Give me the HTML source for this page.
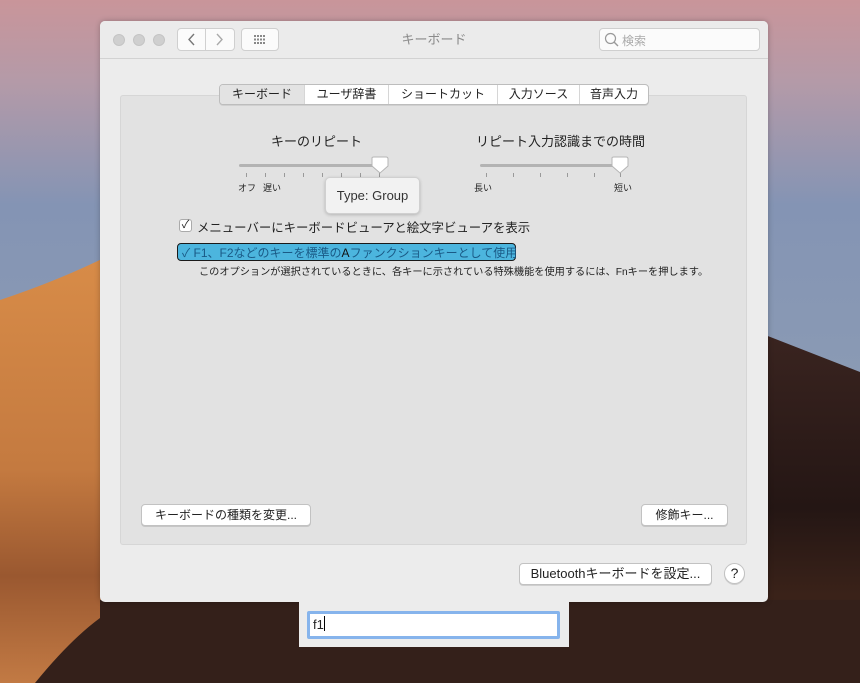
<!DOCTYPE html>
<html><head><meta charset="utf-8"><style>
*{box-sizing:border-box;margin:0;padding:0}
body{width:860px;height:683px;position:relative;overflow:hidden;font-family:"Liberation Sans","Noto Sans CJK JP",sans-serif;color:#222}
.abs{position:absolute}
.win{left:100px;top:21px;width:668px;height:581px;background:#ececec;border-radius:5px;overflow:hidden;box-shadow:0 0 6px rgba(0,0,0,.25)}
.tb{left:0;top:0;width:668px;height:38px;background:#ebebeb;border-bottom:1px solid #d2d2d2}
.dot{width:12px;height:12px;border-radius:50%;background:#cfcfcf;border:1px solid #c4c4c4;top:13px}
.btn{background:#fbfbfb;border:1px solid #cfcfcf;border-radius:4px}
.pbtn{background:#fff;border:1px solid #c2c2c2;border-radius:4px;box-shadow:0 1px 0 rgba(0,0,0,.12);font-size:12px;text-align:center;line-height:20px;height:22px}
.panel{left:20px;top:74px;width:627px;height:450px;background:#e2e2e2;border:1px solid #d6d6d6;border-radius:3px}
.tabs{left:119px;top:63px;height:21px;display:flex;border:1px solid #bdbdbd;border-radius:4px;overflow:hidden;background:#fff;font-size:12px;box-shadow:0 1px 0 rgba(0,0,0,.08)}
.tabs div{line-height:19px;text-align:center;border-left:1px solid #d6d6d6}
.tabs div:first-child{border-left:none;background:#e3e3e3}
.tick{width:1px;height:4px;background:#999;top:152px}
</style></head><body>
<svg class="abs" style="left:0;top:0" width="860" height="683">
<defs>
<linearGradient id="sky" x1="0" y1="0" x2="0" y2="1"><stop offset="0" stop-color="#c9959a"/><stop offset=".12" stop-color="#b49aa8"/><stop offset=".3" stop-color="#8494b4"/><stop offset=".55" stop-color="#8a9ab4"/><stop offset="1" stop-color="#9aa0b0"/></linearGradient>
<linearGradient id="dune" x1="0" y1="0" x2="0" y2="1"><stop offset="0" stop-color="#d88c48"/><stop offset=".5" stop-color="#c47a40"/><stop offset=".75" stop-color="#9a5830"/><stop offset="1" stop-color="#c27a44"/></linearGradient>
<linearGradient id="mt" x1="0" y1="0" x2="0" y2="1"><stop offset="0" stop-color="#3a2420"/><stop offset=".5" stop-color="#241614"/><stop offset=".75" stop-color="#3a2219"/><stop offset="1" stop-color="#2c1a15"/></linearGradient>
</defs>
<rect width="860" height="683" fill="url(#sky)"/>
<path d="M0 300 Q60 280 110 255 L110 683 L0 683Z" fill="url(#dune)"/>
<path d="M760 333 L860 372 L860 683 L760 683Z" fill="url(#mt)"/>
<path d="M100 600 L860 600 L860 683 L35 683 Q70 640 100 618Z" fill="#34201a"/>
</svg>
<div class="abs win">
 <div class="abs tb">
  <div class="abs dot" style="left:13px"></div><div class="abs dot" style="left:33px"></div><div class="abs dot" style="left:53px"></div>
  <div class="abs btn" style="left:77px;top:7px;width:58px;height:23px"></div>
  <div class="abs" style="left:105px;top:8px;width:1px;height:21px;background:#d0d0d0"></div>
  <svg class="abs" style="left:77px;top:7px" width="58" height="23"><path d="M17 6 L12 11.5 L17 17" stroke="#777" stroke-width="1.4" fill="none"/><path d="M40 6 L45 11.5 L40 17" stroke="#aaa" stroke-width="1.4" fill="none"/></svg>
  <div class="abs btn" style="left:141px;top:7px;width:38px;height:23px"></div>
  <svg class="abs" style="left:141px;top:7px" width="38" height="23"><g fill="#888"><rect x="13" y="7" width="2" height="2"/><rect x="16" y="7" width="2" height="2"/><rect x="19" y="7" width="2" height="2"/><rect x="22" y="7" width="2" height="2"/><rect x="13" y="10.5" width="2" height="2"/><rect x="16" y="10.5" width="2" height="2"/><rect x="19" y="10.5" width="2" height="2"/><rect x="22" y="10.5" width="2" height="2"/><rect x="13" y="14" width="2" height="2"/><rect x="16" y="14" width="2" height="2"/><rect x="19" y="14" width="2" height="2"/><rect x="22" y="14" width="2" height="2"/></g></svg>
  <div class="abs" style="left:0;width:668px;top:11px;text-align:center;font-size:13px;color:#8a8a8a;line-height:16px">キーボード</div>
  <div class="abs btn" style="left:499px;top:7px;width:161px;height:23px"></div>
  <svg class="abs" style="left:504px;top:11px" width="16" height="16"><circle cx="6.5" cy="6.5" r="5" stroke="#999" stroke-width="1.2" fill="none"/><path d="M10 10 L14 14" stroke="#999" stroke-width="1.4"/></svg>
  <div class="abs" style="left:522px;top:11px;font-size:12px;color:#aaa">検索</div>
 </div>
 <div class="abs panel"></div>
 <div class="abs tabs"><div style="width:84px">キーボード</div><div style="width:84px">ユーザ辞書</div><div style="width:109px">ショートカット</div><div style="width:82px">入力ソース</div><div style="width:69px">音声入力</div></div>
 <div class="abs" style="left:171px;top:110px;font-size:13px">キーのリピート</div>
 <div class="abs" style="left:376px;top:110px;font-size:13px">リピート入力認識までの時間</div>
 <div class="abs" style="left:139px;top:143px;width:142px;height:3px;background:#b3b3b3;border-radius:2px"></div>
 <div class="abs" style="left:380px;top:143px;width:142px;height:3px;background:#b3b3b3;border-radius:2px"></div>
 <div class="abs tick" style="left:146px"></div><div class="abs tick" style="left:165px"></div><div class="abs tick" style="left:184px"></div><div class="abs tick" style="left:203px"></div><div class="abs tick" style="left:222px"></div><div class="abs tick" style="left:241px"></div><div class="abs tick" style="left:260px"></div><div class="abs tick" style="left:279px"></div>
 <div class="abs tick" style="left:386px"></div><div class="abs tick" style="left:413px"></div><div class="abs tick" style="left:440px"></div><div class="abs tick" style="left:467px"></div><div class="abs tick" style="left:494px"></div><div class="abs tick" style="left:520px"></div>
 <svg class="abs" style="left:270px;top:135px" width="20" height="20"><path d="M2 2 Q2 1 4 1 L16 1 Q18 1 18 3 L18 10 L10 17 L2 10Z" fill="#fff" stroke="#b5b5b5"/></svg>
 <svg class="abs" style="left:510px;top:135px" width="20" height="20"><path d="M2 2 Q2 1 4 1 L16 1 Q18 1 18 3 L18 10 L10 17 L2 10Z" fill="#fff" stroke="#b5b5b5"/></svg>
 <div class="abs" style="left:138px;top:160px;font-size:9px">オフ</div>
 <div class="abs" style="left:163px;top:160px;font-size:9px">遅い</div>
 <div class="abs" style="left:374px;top:160px;font-size:9px">長い</div>
 <div class="abs" style="left:514px;top:160px;font-size:9px">短い</div>
 <div class="abs" style="left:225px;top:156px;width:95px;height:37px;background:#f2f2f2;border:1px solid #d0d0d0;border-radius:5px;box-shadow:0 1px 3px rgba(0,0,0,.2);font-size:13px;line-height:35px;text-align:center;color:#333">Type: Group</div>
 <div class="abs" style="left:79px;top:198px;width:13px;height:13px;background:#fff;border:1px solid #aaa;border-radius:3px;font-size:11px;line-height:11px;text-align:center">✓</div>
 <div class="abs" style="left:97px;top:197px;font-size:12.4px;white-space:nowrap">メニューバーにキーボードビューアと絵文字ビューアを表示</div>
 <div class="abs" style="left:77px;top:222px;width:339px;height:18px;background:#4cb5de;border:1.5px solid #1a1a1a;border-radius:4px"></div>
 <div class="abs" style="left:82px;top:223px;font-size:12px;color:#1a5a86;white-space:nowrap">✓ F1、F2などのキーを標準の<span style="color:#111">A</span>ファンクションキーとして使用</div>
 <div class="abs" style="left:99px;top:242px;font-size:10.2px;white-space:nowrap">このオプションが選択されているときに、各キーに示されている特殊機能を使用するには、Fnキーを押します。</div>
 <div class="abs pbtn" style="left:41px;top:483px;width:170px">キーボードの種類を変更...</div>
 <div class="abs pbtn" style="left:541px;top:483px;width:87px">修飾キー...</div>
 <div class="abs pbtn" style="left:419px;top:542px;width:193px;font-size:13px">Bluetoothキーボードを設定...</div>
 <div class="abs" style="left:624px;top:542px;width:21px;height:21px;border-radius:50%;background:#fff;border:1px solid #c2c2c2;font-size:14px;text-align:center;line-height:19px;box-shadow:0 1px 0 rgba(0,0,0,.12)">?</div>
</div>
<div class="abs" style="left:299px;top:602px;width:270px;height:45px;background:#ececec"></div>
<div class="abs" style="left:307px;top:611px;width:253px;height:28px;background:#fff;border:3px solid #86b4ec;border-radius:2px;font-size:13px;line-height:22px;padding-left:3px">f1<span style="display:inline-block;width:1px;height:15px;background:#000;vertical-align:-2px"></span></div>
</body></html>
